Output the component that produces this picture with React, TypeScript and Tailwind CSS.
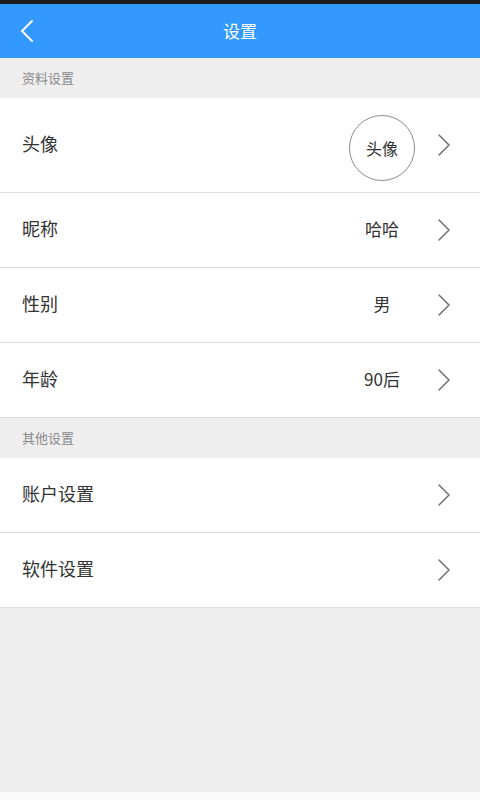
import { ReactNode } from 'react';

const font = { fontFamily: '"Noto Sans CJK SC", "Noto Sans", sans-serif' };

function Chevron({ className }: { className?: string }) {
    return (
        <svg width="14" height="24" viewBox="0 0 14 24" fill="none" className={className}>
            <path d="M2 2 L12 12 L2 22" stroke="#707070" strokeWidth="1.5" strokeLinecap="round" strokeLinejoin="round" />
        </svg>
    );
}

function SectionHeader({ title }: { title: string }) {
    return (
        <div className="h-10 flex items-center pl-[22px] text-[13px] text-[#8a8a8a] bg-[#eeeeee]">
            {title}
        </div>
    );
}

function Row({ label, value, tall }: { label: string; value?: ReactNode; tall?: boolean }) {
    return (
        <div className={`${tall ? 'h-[95px]' : 'h-[75px]'} flex items-center bg-white border-b border-[#dddddd] pl-[22px] pr-[29px]`}>
            <div className="flex-1 text-[18px] text-[#333333] pb-[3px]">{label}</div>
            {value !== undefined && (
                <div className="w-[66px] flex justify-center text-[17px] text-[#333333] pb-[3px]">{value}</div>
            )}
            <Chevron className="ml-[22px]" />
        </div>
    );
}

function App() {
    return (
        <div className="min-h-screen flex flex-col bg-[#eeeeee]" style={font}>
            <div className="h-[4px] bg-[#1c1c1c]" />
            <div className="h-[54px] bg-[#3399ff] flex items-center relative">
                <svg width="14" height="24" viewBox="0 0 14 24" fill="none" className="ml-[20px]">
                    <path d="M12 2 L2 12 L12 22" stroke="#ffffff" strokeWidth="2" strokeLinecap="round" strokeLinejoin="round" />
                </svg>
                <div className="absolute inset-0 flex items-center justify-center text-white text-[17px] pointer-events-none">
                    设置
                </div>
            </div>

            <SectionHeader title="资料设置" />
            <Row
                label="头像"
                tall
                value={
                    <div className="w-[66px] h-[66px] rounded-full border border-[#8c8c8c] flex items-center justify-center text-[16px] text-[#333333] mt-[9px]">
                        头像
                    </div>
                }
            />
            <Row label="昵称" value="哈哈" />
            <Row label="性别" value="男" />
            <Row label="年龄" value="90后" />

            <SectionHeader title="其他设置" />
            <Row label="账户设置" />
            <Row label="软件设置" />

            <div className="flex-1 bg-[#eeeeee]" />
            <div className="h-[8px] bg-[#fafafa]" />
        </div>
    );
}

export default App;
